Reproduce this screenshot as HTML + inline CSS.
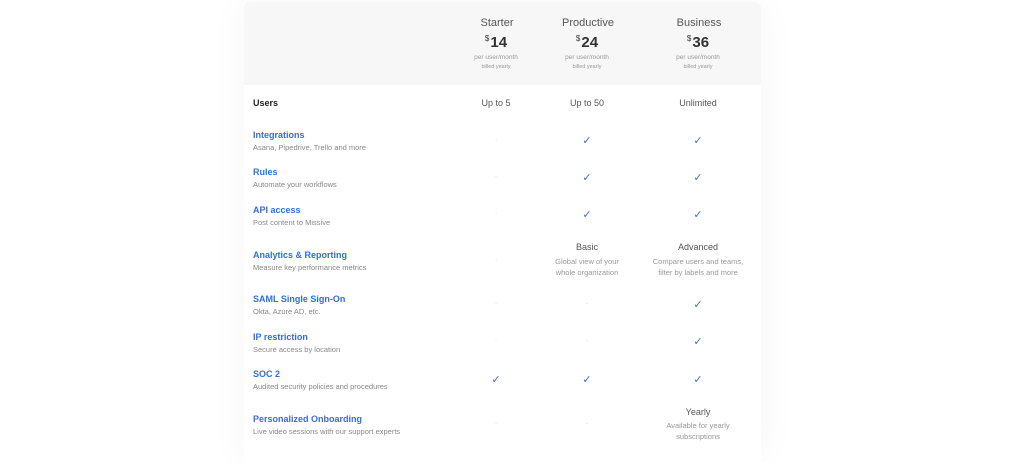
<!DOCTYPE html>
<html><head><style>
body{margin:0;width:1020px;height:447px;background:#fff;font-family:"Liberation Sans",sans-serif;position:relative;overflow:hidden}
.card{position:absolute;left:244px;top:2px;width:517px;height:460px;background:#fff;box-shadow:0 0 40px rgba(0,0,0,0.04);border-radius:6px}
.hdr{position:absolute;left:244px;top:2px;width:517px;height:83px;background:#f7f7f8;border-radius:6px 6px 0 0}
.a{position:absolute;white-space:nowrap}
.c{transform:translateX(-50%);text-align:center}
.t{font-size:9px;font-weight:bold;color:#2f6fde;left:253px}
.s{font-size:7.5px;color:#888;left:253px}
.ck{font-size:11px;color:#3a6fd8}
.d{font-size:7px;color:#ddd}
.pl{font-size:11px;color:#555}
.pr{font-size:15px;font-weight:bold;color:#333}
.pr sup{font-size:8px;font-weight:normal;vertical-align:6px;margin-right:1px}
.sm{font-size:6.5px;color:#999}
.v{font-size:9px;color:#555}
.vs{font-size:7.5px;color:#999;line-height:11px}
</style></head><body>
<div class="card"></div><div class="hdr"></div>
<div class="a c pl" style="left:497px;top:17px">Starter</div>
<div class="a c pl" style="left:588px;top:17px">Productive</div>
<div class="a c pl" style="left:699px;top:17px">Business</div>
<div class="a c pr" style="left:496px;top:34px"><sup>$</sup>14</div>
<div class="a c pr" style="left:587px;top:34px"><sup>$</sup>24</div>
<div class="a c pr" style="left:698px;top:34px"><sup>$</sup>36</div>
<div class="a c sm" style="left:496px;top:54px">per user/month</div>
<div class="a c sm" style="left:587px;top:54px">per user/month</div>
<div class="a c sm" style="left:698px;top:54px">per user/month</div>
<div class="a c sm" style="left:496px;top:64px;font-size:5.5px">billed yearly</div>
<div class="a c sm" style="left:587px;top:64px;font-size:5.5px">billed yearly</div>
<div class="a c sm" style="left:698px;top:64px;font-size:5.5px">billed yearly</div>

<div class="a" style="left:253px;top:98px;font-size:9px;font-weight:bold;color:#222">Users</div>
<div class="a c v" style="left:496px;top:98px">Up to 5</div>
<div class="a c v" style="left:587px;top:98px">Up to 50</div>
<div class="a c v" style="left:698px;top:98px">Unlimited</div>

<div class="a t" style="top:130px">Integrations</div><div class="a s" style="top:143px">Asana, Pipedrive, Trello and more</div>
<div class="a t" style="top:167px">Rules</div><div class="a s" style="top:180px">Automate your workflows</div>
<div class="a t" style="top:205px">API access</div><div class="a s" style="top:218px">Post content to Missive</div>
<div class="a t" style="top:250px">Analytics &amp; Reporting</div><div class="a s" style="top:263px">Measure key performance metrics</div>
<div class="a t" style="top:294px">SAML Single Sign-On</div><div class="a s" style="top:307px">Okta, Azure AD, etc.</div>
<div class="a t" style="top:332px">IP restriction</div><div class="a s" style="top:345px">Secure access by location</div>
<div class="a t" style="top:369px">SOC 2</div><div class="a s" style="top:382px">Audited security policies and procedures</div>
<div class="a t" style="top:414px">Personalized Onboarding</div><div class="a s" style="top:427px">Live video sessions with our support experts</div>

<div class="a c d" style="left:496px;top:137px">-</div><div class="a c ck" style="left:587px;top:134px">✓</div><div class="a c ck" style="left:698px;top:134px">✓</div>
<div class="a c d" style="left:496px;top:174px">-</div><div class="a c ck" style="left:587px;top:171px">✓</div><div class="a c ck" style="left:698px;top:171px">✓</div>
<div class="a c d" style="left:496px;top:211px">-</div><div class="a c ck" style="left:587px;top:208px">✓</div><div class="a c ck" style="left:698px;top:208px">✓</div>
<div class="a c d" style="left:496px;top:257px">-</div>
<div class="a c v" style="left:587px;top:242px">Basic</div>
<div class="a c vs" style="left:587px;top:256px">Global view of your<br>whole organization</div>
<div class="a c v" style="left:698px;top:242px">Advanced</div>
<div class="a c vs" style="left:698px;top:256px">Compare users and teams,<br>filter by labels and more</div>
<div class="a c d" style="left:496px;top:301px">-</div><div class="a c d" style="left:587px;top:301px">-</div><div class="a c ck" style="left:698px;top:298px">✓</div>
<div class="a c d" style="left:496px;top:338px">-</div><div class="a c d" style="left:587px;top:338px">-</div><div class="a c ck" style="left:698px;top:335px">✓</div>
<div class="a c ck" style="left:496px;top:373px">✓</div><div class="a c ck" style="left:587px;top:373px">✓</div><div class="a c ck" style="left:698px;top:373px">✓</div>
<div class="a c d" style="left:496px;top:421px">-</div><div class="a c d" style="left:587px;top:421px">-</div>
<div class="a c v" style="left:698px;top:407px">Yearly</div>
<div class="a c vs" style="left:698px;top:420px">Available for yearly<br>subscriptions</div>
</body></html>
